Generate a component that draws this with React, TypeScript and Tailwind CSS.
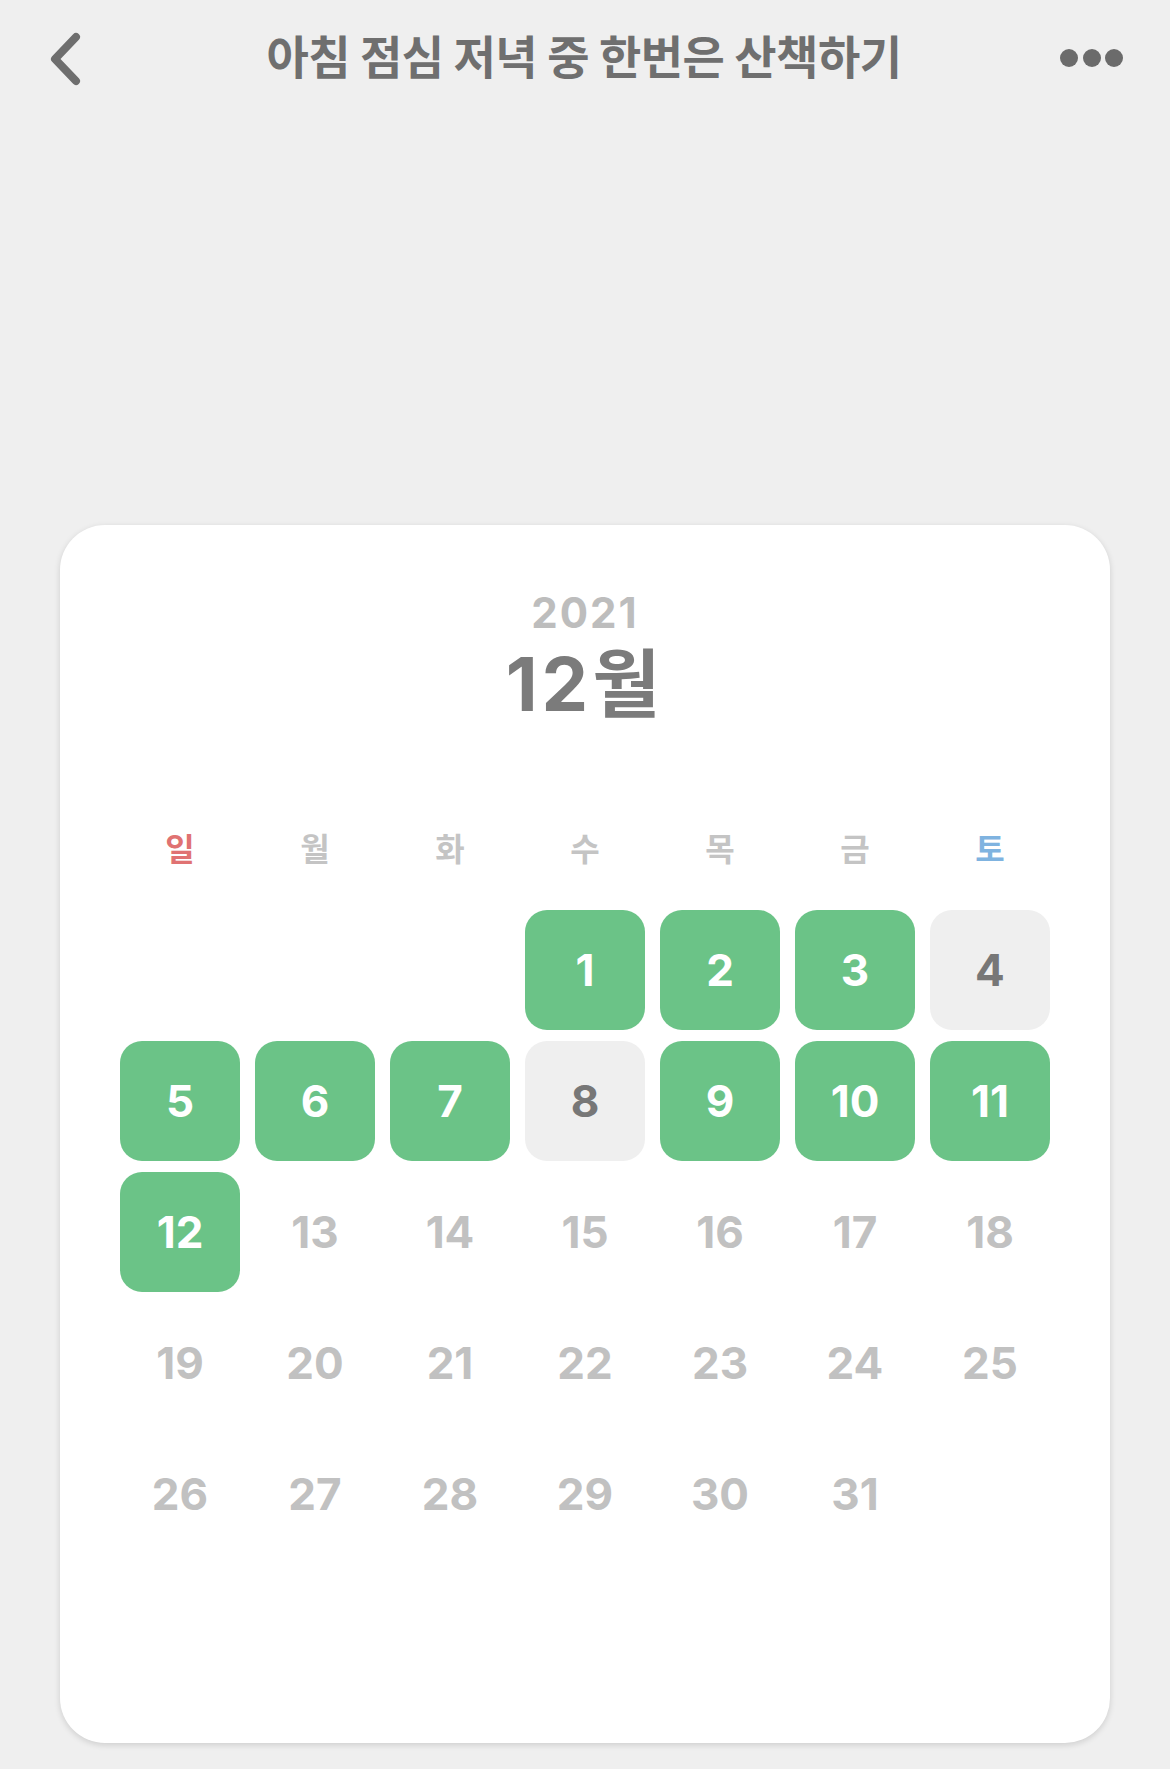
import React from "react";

// 12월 챌린지 달력 화면
const GREEN = new Set([1, 2, 3, 5, 6, 7, 9, 10, 11, 12]);
const MISSED = new Set([4, 8]);
const WEEKDAYS = ["일", "월", "화", "수", "목", "금", "토"];

function BackIcon() {
  return (
    <svg width="40" height="60" viewBox="0 0 40 60" fill="none">
      <path d="M32 8 L11 30 L32 52" stroke="#6e6e6e" strokeWidth="8" strokeLinecap="round" strokeLinejoin="round" />
    </svg>
  );
}

function MoreIcon() {
  return (
    <svg width="66" height="20" viewBox="0 0 66 20" fill="#6b6b6b">
      <circle cx="11" cy="10" r="9" />
      <circle cx="34" cy="10" r="9" />
      <circle cx="56" cy="10" r="9" />
    </svg>
  );
}

function DayCell({ day }: { day: number | null }) {
  if (day === null) return <div className="h-[120px]" />;
  if (GREEN.has(day)) {
    return (
      <div className="h-[120px] rounded-[22px] bg-[#6bc387] flex items-center justify-center text-white text-[44px] font-bold leading-none">
        {day}
      </div>
    );
  }
  if (MISSED.has(day)) {
    return (
      <div className="h-[120px] rounded-[22px] bg-[#efefef] flex items-center justify-center text-[#777777] text-[44px] font-bold leading-none">
        {day}
      </div>
    );
  }
  return (
    <div className="h-[120px] flex items-center justify-center text-[#c1c1c1] text-[44px] font-bold leading-none">
      {day}
    </div>
  );
}

export default function App() {
  // 2021년 12월 1일은 수요일
  const cells: (number | null)[] = [null, null, null];
  for (let d = 1; d <= 31; d++) cells.push(d);

  return (
    <div className="min-h-[1769px] bg-[#efefef] font-['Inter','Noto_Sans_CJK_KR',sans-serif]">
      {/* 상단 바 */}
      <div className="h-[115px] grid grid-cols-[1fr_auto_1fr] items-center pl-[44px] pr-[46px]">
        <div className="flex items-center pt-[2px]">
          <BackIcon />
        </div>
        <div className="pb-[8px] text-[46px] font-bold text-[#6f6f6f] leading-none tracking-[-0.5px] font-['Noto_Sans_CJK_KR',sans-serif]">
          아침 점심 저녁 중 한번은 산책하기
        </div>
        <div className="flex justify-end">
          <MoreIcon />
        </div>
      </div>

      {/* 달력 카드 */}
      <div className="mx-[60px] mt-[410px] h-[1218px] rounded-[45px] bg-white shadow-[0_2px_6px_rgba(0,0,0,0.14)] px-[60px] pt-[67px]">
        <div className="flex flex-col items-center">
          <div className="text-[42px] font-bold leading-none tracking-[2px] text-[#bdbdbd]">2021</div>
          <div className="mt-[13px] text-[74px] font-bold leading-none tracking-[4px] text-[#7b7b7b]">12월</div>
        </div>

        <div className="mt-[110px] grid grid-cols-7 gap-x-[15px]">
          {WEEKDAYS.map((w, i) => (
            <div
              key={w}
              className={
                "text-center text-[32px] font-semibold leading-[32px] font-['Noto_Sans_CJK_KR',sans-serif] " +
                (i === 0 ? "text-[#e07272]" : i === 6 ? "text-[#7fb3e0]" : "text-[#c4c4c4]")
              }
            >
              {w}
            </div>
          ))}
        </div>

        <div className="mt-[47px] grid grid-cols-7 gap-x-[15px] gap-y-[11px]">
          {cells.map((d, i) => (
            <DayCell key={i} day={d} />
          ))}
        </div>
      </div>
    </div>
  );
}
